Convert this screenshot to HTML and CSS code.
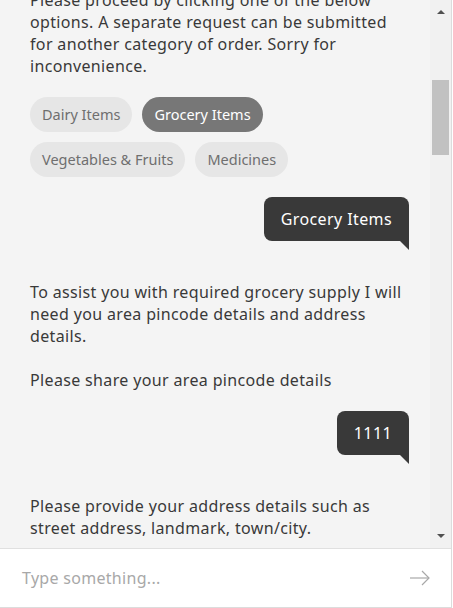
FILE: index.html
```html
<!DOCTYPE html>
<html lang="en">
<head>
<meta charset="utf-8">
<title>Chat</title>
<link rel="stylesheet" href="styles.css">
</head>
<body>
<div class="widget">
  <div class="body">
    <div class="messages">
      <div class="thread">
        <p class="bot-text">Please proceed by clicking one of the below options. A separate request can be submitted for another category of order. Sorry for inconvenience.</p>
        <div class="chips">
          <span class="chip">Dairy Items</span>
          <span class="chip chip-selected">Grocery Items</span>
          <span class="chip">Vegetables &amp; Fruits</span>
          <span class="chip">Medicines</span>
        </div>
        <div class="user-row"><div class="bubble">Grocery Items</div></div>
        <p class="bot-text">To assist you with required grocery supply I will need you area pincode details and address details.<br><br>Please share your area pincode details</p>
        <div class="user-row"><div class="bubble">1111</div></div>
        <p class="bot-text">Please provide your address details such as street address, landmark, town/city.</p>
      </div>
    </div>
    <div class="scrollbar">
      <span class="sb-arrow sb-up"></span>
      <span class="sb-thumb"></span>
      <span class="sb-fill"></span>
      <span class="sb-arrow sb-down"></span>
    </div>
  </div>
  <div class="composer">
    <span class="placeholder">Type something...</span>
    <svg class="send" width="20" height="16" viewBox="0 0 20 16" fill="none" stroke="#a8a8a8" stroke-width="1.2">
      <path d="M0 8 H19"/>
      <path d="M12 1 L19 8 L12 15"/>
    </svg>
  </div>
</div>
</body>
</html>
```
FILE: styles.css
```css
* { box-sizing: border-box; }
html, body { margin: 0; padding: 0; }
body {
  width: 453px;
  height: 608px;
  background: #ffffff;
  font-family: "Noto Sans", "DejaVu Sans", sans-serif;
  color: #393939;
}
.widget {
  width: 452px;
  height: 608px;
  border-right: 1px solid #dcdcdc;
  border-bottom: 1px solid #dcdcdc;
  display: flex;
  flex-direction: column;
}
.body {
  height: 549px;
  display: flex;
  border-bottom: 1px solid #e0e0e0;
  background: #f4f4f4;
}
.messages {
  flex: 1;
  overflow: hidden;
  padding: 0 21px 0 30px;
}
.thread {
  margin-top: -11px;
  display: flex;
  flex-direction: column;
}
.bot-text {
  margin: 0 0 20px 0;
  font-size: 16px;
  line-height: 22px;
  letter-spacing: 0.35px;
  max-width: 379px;
}
.chips {
  display: flex;
  flex-wrap: wrap;
  gap: 10px;
  margin-bottom: 20px;
}
.chip {
  height: 35px;
  padding: 0 12px;
  border-radius: 18px;
  background: #e6e6e6;
  color: #6f6f6f;
  font-size: 14.5px;
  line-height: 35px;
}
.chip-selected {
  background: #777777;
  color: #ffffff;
}
.user-row {
  display: flex;
  justify-content: flex-end;
  margin-bottom: 40px;
}
.bubble {
  position: relative;
  background: #393939;
  color: #ffffff;
  font-size: 16px;
  line-height: 22px;
  letter-spacing: 0.4px;
  padding: 11px 17px;
  border-radius: 8px 8px 0 8px;
}
.bubble::after {
  content: "";
  position: absolute;
  top: 100%;
  right: 0;
  border-top: 9px solid #393939;
  border-left: 9px solid transparent;
}
.scrollbar {
  width: 21px;
  background: #f1f1f1;
  display: flex;
  flex-direction: column;
  align-items: center;
}
.sb-arrow {
  width: 0;
  height: 0;
  border-left: 4px solid transparent;
  border-right: 4px solid transparent;
}
.sb-up {
  margin-top: 10px;
  border-bottom: 4px solid #505050;
}
.sb-down {
  margin-bottom: 10px;
  border-top: 4px solid #505050;
}
.sb-thumb {
  margin-top: 66px;
  width: 17px;
  height: 75px;
  background: #c1c1c1;
}
.sb-fill { flex: 1; }
.composer {
  flex: 1;
  display: flex;
  align-items: center;
  justify-content: space-between;
  padding: 0 21px 0 22px;
  background: #ffffff;
}
.placeholder {
  font-size: 16px;
  letter-spacing: 0.3px;
  color: #a8a8a8;
}
.send { display: block; }
```
